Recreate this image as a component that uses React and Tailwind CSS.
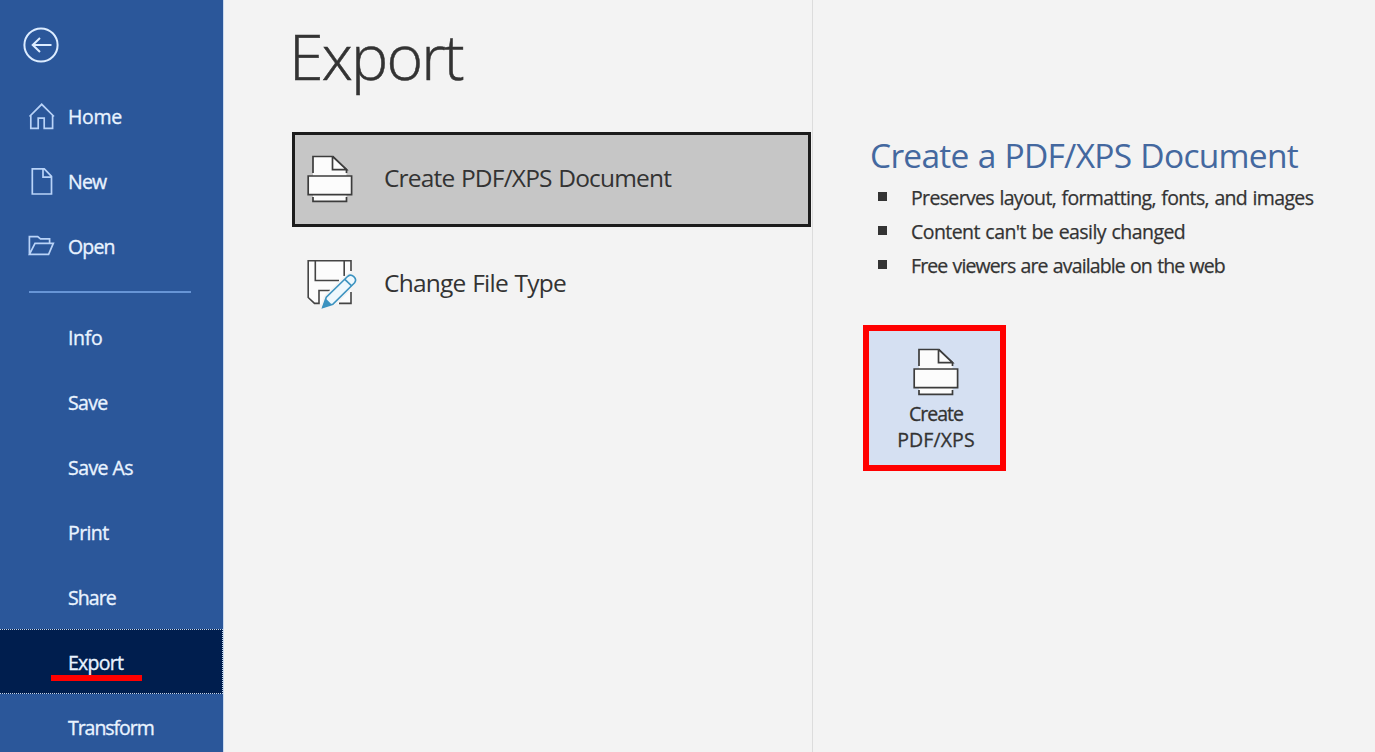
function BackIcon() {
  return (
    <svg width="36" height="36" viewBox="0 0 36 36" fill="none" stroke="#dcecff" strokeWidth="2">
      <circle cx="18" cy="18" r="16.6" />
      <path d="M28.5 18H10M17 11l-7.3 7 7.3 7" />
    </svg>
  );
}

function HomeIcon() {
  return (
    <svg width="28" height="28" viewBox="0 0 28 28" fill="none" stroke="#b9d3f8" strokeWidth="1.7">
      <path d="M1.5 13.5L13.7 1.3 26 13.5M2.8 12.5V25.3h7.4V15.2h6v10.1h8.4V12.5" />
    </svg>
  );
}

function NewIcon() {
  return (
    <svg width="28" height="28" viewBox="0 0 28 28" fill="none" stroke="#b9d3f8" strokeWidth="1.7">
      <path d="M4.3 .9H16.3L23.5 8.3V26H4.3zM15 .9V9.1H23.5" />
    </svg>
  );
}

function OpenIcon() {
  return (
    <svg width="28" height="28" viewBox="0 0 28 28" fill="none" stroke="#b9d3f8" strokeWidth="1.7">
      <path d="M1.4 21.3V3.7H9.7L12.5 5.9H21.6V10.4M1.4 21.3L7 10.4H25.3L20.6 21.3z" />
    </svg>
  );
}

function PrinterIcon() {
  return (
    <svg width="46" height="48" viewBox="0 0 46 48" fill="#fcfcfc" stroke="#3c3c3c" strokeWidth="1.7">
      <path stroke="none" d="M6 1.5H26L39.5 14.5V46.5H6z" />
      <path d="M6 18V1.5H26L39.5 14.6V18" />
      <path d="M25.5 1.5V14.6H39.5L25.5 1.5" />
      <path d="M1.2 21H44.6V39.6H1.2z" />
      <path d="M6 42V46.4H39.5V42" />
    </svg>
  );
}

function FileTypeIcon() {
  return (
    <svg width="50" height="50" viewBox="0 0 50 50" fill="none" stroke="#444" strokeWidth="1.6">
      <path fill="#fcfcfc" stroke="none" d="M1 2H44V45H7L1 39z" />
      <path d="M44 12V1.8H1.2V38.5L7.5 44.4H12V31.5H23M44 33V44.4H32" />
      <path d="M8.3 2V21.5H32M37.2 2V17" />
      <path stroke="#f3f3f3" strokeWidth="5" fill="#f3f3f3" d="M15.7 48.5L19.3 38.2 40.8 17.3C44.6 14 50.8 19.5 47.6 23.7L25.8 45.2z" />
      <path fill="#eef8fd" stroke="#3c93c0" d="M15.7 48.5L19.3 38.2 40.8 17.3C44.6 14 50.8 19.5 47.6 23.7L25.8 45.2z" />
      <path stroke="#3c93c0" d="M37.8 20.3L44.4 26.6" />
      <path fill="#3c93c0" stroke="none" d="M15 49L18.7 39.5 24.8 45.4z" />
    </svg>
  );
}

const mainItems = [
  { label: "Home", icon: <HomeIcon />, tracking: "tracking-[-0.3px]" },
  { label: "New", icon: <NewIcon />, tracking: "tracking-[-0.8px]" },
  { label: "Open", icon: <OpenIcon />, tracking: "tracking-[-0.85px]" },
];

const fileItems = [
  { label: "Info", tracking: "tracking-[-0.35px]" },
  { label: "Save", tracking: "tracking-[-0.7px]" },
  { label: "Save As", tracking: "tracking-[-0.55px]" },
  { label: "Print", tracking: "tracking-[-0.6px]" },
  { label: "Share", tracking: "tracking-[-0.95px]" },
  { label: "Export", tracking: "tracking-[-0.75px]", active: true },
  { label: "Transform", tracking: "tracking-[-1.05px]" },
];

const features = [
  { text: "Preserves layout, formatting, fonts, and images", tracking: "tracking-[-0.65px]" },
  { text: "Content can't be easily changed", tracking: "tracking-[-0.56px]" },
  { text: "Free viewers are available on the web", tracking: "tracking-[-0.88px]" },
];

const navText = "text-[19.5px] leading-6 [-webkit-text-stroke:0.35px]";

export default function App() {
  return (
    <div className="flex h-[752px] w-[1375px] overflow-hidden bg-[#f3f3f3] font-['Open_Sans','Noto_Sans',sans-serif] text-[#333]">
      <nav className="w-[224px] shrink-0 bg-[#2b579a] text-[#e9f3ff]">
        <div className="h-full border-r border-[#c9d9ee]">
          <div className="flex h-[84px] pt-[27px] pl-[23px]"><BackIcon /></div>
          <ul>
            {mainItems.map((item) => (
              <li key={item.label} className="flex h-[65px] items-center">
                <span className="ml-7 flex w-10 shrink-0">{item.icon}</span>
                <span className={`${navText} ${item.tracking}`}>{item.label}</span>
              </li>
            ))}
          </ul>
          <div className="h-[25px] pt-3">
            <div className="ml-[29px] h-[2px] w-[162px] bg-[#6795d6]" />
          </div>
          <ul>
            {fileItems.map((item) => (
              <li
                key={item.label}
                className={
                  item.active
                    ? "relative flex h-[65px] items-center border-y border-r border-dotted border-[#c4d4ea] bg-[#001e4e] pt-[2px] pl-[68px]"
                    : "flex h-[65px] items-center pt-[2px] pl-[68px]"
                }
              >
                <span className={`${navText} ${item.tracking}`}>{item.label}</span>
                {item.active && <span className="absolute top-[45px] left-[51px] h-[6px] w-[91px] bg-[#ff0000]" />}
              </li>
            ))}
          </ul>
        </div>
      </nav>

      <section className="w-[589px] shrink-0 border-r border-[#dcdcdc] pl-[68px]">
        <h1 className="-ml-[3px] h-[132px] pt-[13px] text-[62.5px] leading-[86px] font-light tracking-[-1.8px] [-webkit-text-stroke:0.5px]">Export</h1>
        <div className="flex h-[95px] w-[519px] items-center border-[3px] border-[#1c1c1c] bg-[#c6c6c6] pb-[2px] pl-[12px]">
          <PrinterIcon />
          <span className="ml-[31px] text-[24.5px] tracking-[-0.82px] [word-spacing:1px]">Create PDF/XPS Document</span>
        </div>
        <div className="flex h-[112px] items-center pl-[15px]">
          <span className="mt-px flex"><FileTypeIcon /></span>
          <span className="ml-[27px] text-[24.5px] tracking-[-0.76px] [word-spacing:1px]">Change File Type</span>
        </div>
      </section>

      <section className="pt-[130px] pl-[57px]">
        <h2 className="h-[51px] text-[33.5px] leading-[50px] tracking-[-0.72px] [word-spacing:1px] whitespace-nowrap text-[#44689f]">Create a PDF/XPS Document</h2>
        <ul>
          {features.map((f) => (
            <li key={f.text} className="flex h-[34px] items-center pl-2">
              <span className="mr-[24px] mb-[4px] size-[9px] bg-[#333]" />
              <span className={`text-[19.5px] whitespace-nowrap [word-spacing:1px] [-webkit-text-stroke:0.25px] ${f.tracking}`}>{f.text}</span>
            </li>
          ))}
        </ul>
        <button className="mt-[42px] -ml-[7px] flex h-[146px] w-[143px] flex-col items-center border-[6px] border-[#ff0000] bg-[#d5e0f2] pt-[17px] pl-[3px] text-[19.5px] leading-[26px] [-webkit-text-stroke:0.3px]">
          <PrinterIcon />
          <span className="mt-[5px] tracking-[-1px]">Create</span>
          <span className="tracking-[0.1px]">PDF/XPS</span>
        </button>
      </section>
    </div>
  );
}
